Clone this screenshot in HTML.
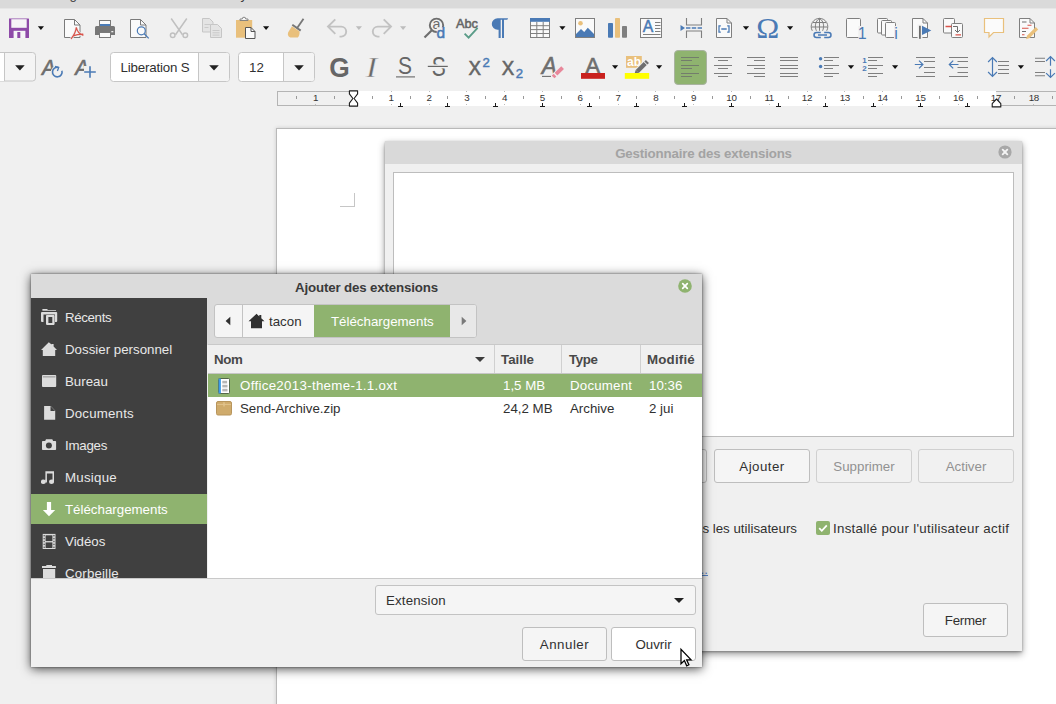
<!DOCTYPE html>
<html lang="fr">
<head>
<meta charset="utf-8">
<title>Ajouter des extensions</title>
<style>
*{box-sizing:border-box;margin:0;padding:0}
html,body{width:1056px;height:704px;overflow:hidden;background:#f0f0f0}
body{font-family:"Liberation Sans","DejaVu Sans",sans-serif;font-size:13.3px;color:#303030;position:relative}
.abs{position:absolute}
#root{position:absolute;left:0;top:0;width:1056px;height:704px;overflow:hidden;background:#f0f0f0}
.t{position:absolute;white-space:nowrap;line-height:16px;height:16px}
/* top strip */
#strip{left:0;top:0;width:1056px;height:9px;background:linear-gradient(#dadada 0,#dadada 7.500px,#ececec 9px);overflow:hidden}
/* toolbar combos */
.combo{position:absolute;top:52px;height:29px;background:#fff;border:1px solid #c4c4c4;border-radius:3px}
.combo .sep{position:absolute;top:0;bottom:0;width:1px;background:#c4c4c4}
.arr{position:absolute;width:0;height:0;border-left:4px solid transparent;border-right:4px solid transparent;border-top:4px solid #222}
.arrs{position:absolute;width:0;height:0;border-left:3px solid transparent;border-right:3px solid transparent;border-top:4px solid #222}
/* ruler */
#ruler{left:277px;top:91px;width:779px;height:15px;background:#fff}
.rnum{position:absolute;top:-1.500px;font-size:9.800px;line-height:15px;color:#333;letter-spacing:-.3px;width:20px;margin-left:-10px;text-align:center}
/* page */
#page{left:276px;top:128px;width:800px;height:600px;background:#fff;border:1px solid #b9b9b9;box-shadow:0 0 4px rgba(0,0,0,.16)}
/* dialogs */
#ext{left:385px;top:141px;width:637px;height:510px;background:#f0f0f0;box-shadow:0 3px 7px rgba(0,0,0,.42),0 1px 2px rgba(0,0,0,.28)}
#ext .title{left:0;top:0;width:637px;height:23px;background:#d9d9d9}
.btn{position:absolute;height:34px;background:#f5f5f5;border:1px solid #bebebe;border-radius:3px;text-align:center;line-height:34px;font-size:13.3px;color:#303030}
.btn.dis{color:#929292;background:#f1f1f1;border-color:#d0d0d0}
#fd{left:31px;top:274px;width:671px;height:393px;background:#f0f0f0;box-shadow:0 1.500px 10px rgba(0,0,0,.7),0 0 2px rgba(0,0,0,.5)}
#fd .title{left:0;top:0;width:671px;height:71px;background:#dbdbdb}
#side{left:0;top:24px;width:176px;height:280px;background:#404040;overflow:hidden}
.si{position:absolute;left:0;width:176px;height:32px;color:#e8e8e8}
.si span{position:absolute;left:34px;top:9px;line-height:16px;font-size:13.3px;white-space:nowrap}
.si svg{position:absolute;left:10px;top:8px}
.si.sel{background:#8fb36f;color:#fff}
#list{left:177px;top:71px;width:494px;height:233px;background:#fff}
#hdr{left:0;top:0;width:494px;height:29px;background:#f0f0f0;border-bottom:1px solid #c6c6c6}
#hdr .cs{position:absolute;top:0;width:1px;height:28px;background:#d0d0d0}
.h{position:absolute;top:7px;font-weight:bold;font-size:13.3px;line-height:16px;color:#484848}
.row{position:absolute;left:0;width:494px;height:24px}
.row span{position:absolute;top:4px;line-height:16px;white-space:nowrap}
.row.sel{background:#8fb36f;color:#fff}
.row.sel span{top:4px}
</style>
</head>
<body>
<div id="root">
<div id="strip" class="abs"><span class="t" style="left:29px;top:-13.400px;color:#3c3c3c">Affichage</span><span class="t" style="left:228px;top:-13.400px;color:#3c3c3c">Styles</span></div>

<svg class="abs" style="left:0;top:0" width="1056" height="50" viewBox="0 0 1056 50" font-family="Liberation Sans, sans-serif">
<defs><path id="dd" d="M0 0h6.200L3.100 3.700z"/></defs>
<!-- save -->
<path d="M9 18.500h19.500a.5.500 0 0 1 .5.500v18.500a.5.500 0 0 1-.5.500H9.500a.5.500 0 0 1-.5-.5z" fill="#8e4aa8"/>
<rect x="11.300" y="19.200" width="15.400" height="8.600" fill="#f6f4f7"/>
<rect x="13.600" y="30.800" width="11.800" height="7.200" fill="#f6f4f7"/><rect x="17.300" y="32" width="3" height="6" fill="#8e4aa8"/>
<use href="#dd" x="37.800" y="26.300" fill="#111"/>
<!-- pdf -->
<path d="M64.500 19.500h10l5.500 5.500v12.500h-15.500z" fill="#fafafa" stroke="#7a7a7a" stroke-width="1"/><path d="M74.500 19.500v5.500h5.500" fill="none" stroke="#7a7a7a"/>
<path d="M71.300 38.600c2.600-3.300 4.600-7.300 5-11.200c.7 3.600 3 6.600 6.600 7.900M73.200 35.900c3-1.200 6.200-1.800 9.700-1.700" fill="none" stroke="#f0f0f0" stroke-width="2.600" stroke-linecap="round"/>
<path d="M71.300 38.600c2.600-3.300 4.600-7.300 5-11.200c.7 3.600 3 6.600 6.600 7.900M73.200 35.900c3-1.200 6.200-1.800 9.700-1.700" fill="none" stroke="#d9534a" stroke-width="1.200" stroke-linecap="round"/>
<!-- print -->
<rect x="99.500" y="20.500" width="11" height="6" fill="#fafafa" stroke="#7a7a7a"/><rect x="100" y="24" width="10" height="2.500" fill="#4a7ab5"/>
<path d="M96.500 26h17a1.500 1.500 0 0 1 1.500 1.500v7.500h-20v-7.500a1.500 1.500 0 0 1 1.500-1.500z" fill="#777"/>
<rect x="99.500" y="32.500" width="11" height="5" fill="#fafafa" stroke="#7a7a7a"/><rect x="111.300" y="31" width="2" height="1.300" fill="#f0f0f0"/>
<!-- preview -->
<path d="M130.500 19.500h10l5.500 5.500v12.500h-15.500z" fill="#fafafa" stroke="#7a7a7a"/><path d="M140.500 19.500v5.500h5.500" fill="none" stroke="#7a7a7a"/>
<circle cx="141.300" cy="30.800" r="4" fill="#fafafa" stroke="#4a7ab5" stroke-width="1.200"/><path d="M144.200 33.700l4.500 4.700" stroke="#4a7ab5" stroke-width="1.300"/>
<!-- cut (disabled) -->
<g stroke="#c0c0c0" stroke-width="1.500" fill="none"><path d="M171.200 18.500l11.300 16.200M186.800 18.500l-11.300 16.200"/><circle cx="172.700" cy="35.200" r="2.300"/><circle cx="185.300" cy="35.200" r="2.300"/></g>
<!-- copy (disabled) -->
<g fill="#e4e4e4" stroke="#c6c6c6" stroke-width="1"><path d="M202.500 18.500h7l3.500 3.500v10h-10.500z"/><path d="M210.500 24.500h7l4 4v9h-11z"/></g>
<g stroke="#c6c6c6" stroke-width=".9"><path d="M204.500 24.500h6M204.500 27.500h4M212.500 30.500h7M212.500 32.800h7M212.500 35.100h7"/></g>
<!-- paste -->
<path d="M236 20h16.200v17.700H236z" fill="#e9c07c"/><path d="M240 20.500v-1.500h2.200a1.800 1.800 0 0 1 3.600 0H248v1.500z" fill="#f6f6f6" stroke="#7a7a7a" stroke-width=".9"/>
<path d="M245.500 27.500h5.500l4 4v7h-9.500z" fill="#fafafa" stroke="#555" stroke-width="1"/><path d="M251 27.500v4h4" fill="none" stroke="#555"/>
<use href="#dd" x="263" y="26.300" fill="#111"/>
<!-- clone brush -->
<path d="M303.500 18.800l-6.700 9.800" stroke="#777" stroke-width="1.800"/><path d="M292.300 24.800l8.400 5.800" stroke="#777" stroke-width="2"/>
<path d="M292 26.200l7.600 5.200c.2 2.400-.6 4.700-1.800 6.200h-7.500c-2.600-1-3-3.600-1.800-5.800z" fill="#e9c07c"/>
<!-- undo / redo (disabled) -->
<g stroke="#c2c2c2" stroke-width="1.900" fill="none"><path d="M335.300 19.300L328 26.600l7.300 7.300M328.500 26.600h12.700a5 5 0 0 1 0 10h-1.700"/><path d="M383.700 19.300l7.300 7.300-7.300 7.300M390.500 26.600h-12.700a5 5 0 0 0 0 10h1.700"/></g>
<use href="#dd" x="355.800" y="26.200" fill="#bdbdbd"/><use href="#dd" x="400" y="26.200" fill="#bdbdbd"/>
<!-- find & replace -->
<circle cx="436.500" cy="25.300" r="6.700" fill="none" stroke="#6e6e6e" stroke-width="1.900"/><path d="M431.600 30.400l-7.100 7.100" stroke="#6e6e6e" stroke-width="2.100"/>
<text x="432.400" y="29.300" font-size="14.300" fill="#6a6a6a">a</text><rect x="436.800" y="27.200" width="9" height="11" fill="#f0f0f0"/><text x="436.600" y="38" font-size="15.500" fill="#4a7ab5" stroke="#4a7ab5" stroke-width=".5">d</text>
<!-- spelling -->
<text x="456" y="27.800" font-size="13.200" fill="#666" stroke="#666" stroke-width=".55" textLength="22" lengthAdjust="spacingAndGlyphs">Abc</text>
<path d="M464.600 33.600l4 4 9-9.700" fill="none" stroke="#5a9c88" stroke-width="1.900"/>
<!-- pilcrow -->
<path d="M497.600 18.200H508.100L507.300 19.800H504V38h-2V19.800h-1.300V38h-2.100V29.800h-1a5.800 5.800 0 0 1 0-11.600z" fill="#4a7ab5"/>
<!-- table -->
<rect x="530.500" y="18.500" width="19" height="19" fill="#fafafa" stroke="#7f7f7f"/><rect x="530" y="18" width="20" height="3.800" fill="#4a7ab5"/>
<path d="M530.500 25.700h19M530.500 29.600h19M530.500 33.500h19M536.800 22v15.500M543.200 22v15.500" stroke="#7f7f7f" stroke-width="1"/>
<use href="#dd" x="559.300" y="26.300" fill="#111"/>
<!-- image -->
<rect x="575.500" y="18.500" width="19" height="19" fill="#fafafa" stroke="#7f7f7f"/><circle cx="580.500" cy="23.300" r="2.300" fill="#e9c07c"/>
<path d="M576 37v-3l5-5 3.200 3 3.600-4.200L594 34v3z" fill="#4a7ab5"/>
<!-- chart -->
<rect x="608" y="23" width="5" height="14.800" rx=".8" fill="#4a7ab5"/><rect x="615" y="18" width="5" height="19.800" rx=".8" fill="#e9c07c"/><rect x="622" y="26" width="5" height="11.800" rx=".8" fill="#7f7f7f"/>
<!-- text box -->
<rect x="640.500" y="18.500" width="21" height="19" fill="#fafafa" stroke="#7f7f7f"/>
<text x="642.700" y="32" font-size="16" fill="#4a7ab5" stroke="#4a7ab5" stroke-width=".5" textLength="10.500" lengthAdjust="spacingAndGlyphs">A</text>
<path d="M655 22.500h5.500M655 25.500h5.500M655 28.500h5.500M655 31.500h5.500M643 34.500h17.500" stroke="#7f7f7f" stroke-width="1"/>
<!-- page break -->
<path d="M686.500 18v7h15V18M686.500 38v-7h15V38" fill="none" stroke="#7f7f7f" stroke-width="1.100"/>
<path d="M680.500 25l4.500 3-4.500 3z" fill="#4a7ab5"/><path d="M686 28h16" stroke="#4a7ab5" stroke-width="1.600" stroke-dasharray="4.400 1.400"/>
<!-- field -->
<path d="M716.500 18.500h10.500l4.500 4.500v14.500h-15z" fill="#fafafa" stroke="#7f7f7f"/><path d="M727 18.500v4.500h4.500" fill="none" stroke="#7f7f7f"/>
<path d="M720.800 25.800h-1.800v6.400h1.800M727.200 25.800h1.800v6.400h-1.800M721.300 29h5.400" fill="none" stroke="#4a7ab5" stroke-width="1.300"/>
<use href="#dd" x="742.900" y="26.300" fill="#111"/>
<!-- special char -->
<text x="756.300" y="37.800" font-family="Liberation Serif, serif" font-size="29" fill="#4a7ab5" textLength="23" lengthAdjust="spacingAndGlyphs">Ω</text>
<use href="#dd" x="787" y="26.300" fill="#111"/>
<!-- hyperlink -->
<g fill="none" stroke="#7f7f7f" stroke-width="1"><path d="M812.300 30.800a8.300 8.300 0 1 1 14.400 0"/><path d="M819.500 18.300v12.500M811.300 27h16.400M813 22.500h13"/><path d="M816.400 30.800c-1.800-4-1.400-9.500 3.100-12.400c4.500 2.900 4.900 8.400 3.100 12.400"/></g>
<g fill="none" stroke="#4a7ab5" stroke-width="1.500"><path d="M820.800 32.500h-4.300a2.500 2.500 0 0 0 0 5h4.300M824.200 32.500h4.300a2.500 2.500 0 0 1 0 5h-4.300M818 35h9"/></g>
<!-- footnote -->
<rect x="846.500" y="18.500" width="14" height="19" rx="1" fill="#fafafa" stroke="#7f7f7f"/>
<rect x="858.300" y="26" width="7" height="13" fill="#f0f0f0"/><text x="857.800" y="38.700" font-size="16" fill="#4a7ab5">1</text>
<!-- endnote -->
<g fill="#fafafa" stroke="#7f7f7f"><rect x="877.500" y="18.500" width="10" height="14.500" rx="1"/><rect x="881.500" y="20.500" width="10" height="14.500" rx="1"/><rect x="885.500" y="22.500" width="10" height="15" rx="1"/></g>
<rect x="894" y="26" width="4" height="13" fill="#f0f0f0"/><text x="894.300" y="38.700" font-size="16" fill="#4a7ab5">i</text>
<!-- bookmark -->
<path d="M912.500 18.500h10.500l4.500 4.500v14.500h-15z" fill="#fafafa" stroke="#7f7f7f"/><path d="M923 18.500v4.500h4.500" fill="none" stroke="#7f7f7f"/>
<rect x="917.500" y="24.500" width="5" height="14" fill="#f0f0f0"/><rect x="919" y="25.800" width="1.800" height="13" fill="#6e6e6e"/><path d="M922 25.800l9.300 4.600-9.300 4.600z" fill="#4a7ab5"/>
<!-- cross reference -->
<rect x="943.500" y="18.500" width="11" height="14.500" rx="1" fill="#fafafa" stroke="#7f7f7f"/><rect x="951.500" y="23.500" width="11" height="14" rx="1" fill="#fafafa" stroke="#7f7f7f"/>
<path d="M945.500 26.500h6M955.500 34.800h5.500" stroke="#d9534a" stroke-width="1.300"/><path d="M953 26.500h4.500v5.500M955 30l2.500 2.500 2.500-2.500" fill="none" stroke="#6e6e6e" stroke-width="1"/>
<!-- comment -->
<path d="M984.500 18.500h19v14h-10l-4.500 4.500v-4.500h-4.500z" fill="#fbfbfb" stroke="#e9c07c" stroke-width="1.200"/>
<!-- track changes -->
<path d="M1019.500 18.500h10.500l4.500 4.500v14.500h-15z" fill="#fafafa" stroke="#7f7f7f"/><path d="M1030 18.500v4.500h4.500" fill="none" stroke="#7f7f7f"/>
<path d="M1022 22h4.500M1022 31.500h4" stroke="#6e6e6e" stroke-width="1"/><path d="M1027.500 25.200h4M1022 28.300h6.500M1022 34.700h2.500" stroke="#d9534a" stroke-width="1.100"/>
<path d="M1035.800 27l2.400 2.400-8.600 8.600-3.600 1.200 1.200-3.600z" fill="#e9c07c"/>
</svg>
<svg class="abs" style="left:0;top:48px" width="1056" height="40" viewBox="0 48 1056 40" font-family="Liberation Sans, sans-serif">
<defs><path id="dd2" d="M0 0h6.200L3.100 3.700z"/><path id="da" d="M0 0h9.600L4.800 5.300z"/></defs>
<path d="M-2 52.500h34.500a3 3 0 0 1 3 3v22.500a3 3 0 0 1-3 3H-2z" fill="#f4f4f4" stroke="#c6c6c6"/><rect x="-2" y="53" width="6" height="28" fill="#fff"/><path d="M4.500 53v28" stroke="#c6c6c6"/>
<use href="#da" x="15.100" y="65.200" fill="#222"/>
<text x="42" y="75" font-size="22.500" font-style="italic" fill="#6e6e6e" stroke="#6e6e6e" stroke-width=".7" textLength="13.500" lengthAdjust="spacingAndGlyphs">A</text>
<circle cx="57.300" cy="72" r="6.300" fill="#f0f0f0"/><path d="M61.900 70.700a4.800 4.800 0 1 1-3.400-3.300" fill="none" stroke="#4a7ab5" stroke-width="1.600"/><path d="M55 66.300l3.700 1.200-1.300 3.400" fill="none" stroke="#4a7ab5" stroke-width="1.300"/>
<text x="75.300" y="75" font-size="22.500" font-style="italic" fill="#6e6e6e" stroke="#6e6e6e" stroke-width=".7" textLength="13.500" lengthAdjust="spacingAndGlyphs">A</text>
<rect x="84" y="66" width="12" height="12" fill="#f0f0f0"/><path d="M90 66.200v11.600M84.200 72h11.600" stroke="#4a7ab5" stroke-width="1.600"/>
<rect x="110.500" y="52.500" width="119" height="29" rx="3" fill="#fff" stroke="#c6c6c6"/><path d="M198.500 53h28a2.500 2.500 0 0 1 2.500 2.500v23a2.500 2.500 0 0 1-2.500 2.500h-28z" fill="#f4f4f4"/><path d="M198.500 53v28" stroke="#c6c6c6"/>
<text x="120.500" y="72" font-size="13.300" fill="#303030" textLength="69" lengthAdjust="spacing">Liberation S</text>
<use href="#da" x="209.200" y="65.200" fill="#222"/>
<rect x="238.500" y="52.500" width="76" height="29" rx="3" fill="#fff" stroke="#c6c6c6"/><path d="M283.500 53h28a2.500 2.500 0 0 1 2.500 2.500v23a2.500 2.500 0 0 1-2.500 2.500h-28z" fill="#f4f4f4"/><path d="M283.500 53v28" stroke="#c6c6c6"/>
<text x="249" y="72" font-size="13.300" fill="#303030">12</text>
<use href="#da" x="294.200" y="65.200" fill="#222"/>
<text x="329.200" y="76.500" font-size="27" font-weight="bold" fill="#666" textLength="20.500" lengthAdjust="spacingAndGlyphs">G</text>
<text x="365.800" y="76.500" font-family="Liberation Serif, serif" font-style="italic" font-size="29.500" fill="#6a6a6a" stroke="#f0f0f0" stroke-width=".4" textLength="11.500" lengthAdjust="spacingAndGlyphs">I</text>
<text x="398" y="73.600" font-size="23.500" fill="#666" textLength="14" lengthAdjust="spacingAndGlyphs">S</text><path d="M396 76.900h19" stroke="#666" stroke-width="1.100"/>
<text x="431.700" y="76.300" font-size="27" fill="#666" textLength="14" lengthAdjust="spacingAndGlyphs">S</text><rect x="427" y="64.400" width="22" height="4" fill="#f0f0f0"/><path d="M427.800 66.400h20" stroke="#666" stroke-width="1.200"/>
<text x="468.500" y="75.400" font-size="20" fill="#666" stroke="#666" stroke-width=".6" textLength="12.500" lengthAdjust="spacingAndGlyphs">X</text><text x="482.500" y="66.700" font-size="13.200" fill="#4a7ab5" stroke="#4a7ab5" stroke-width=".45">2</text>
<text x="501.700" y="75.400" font-size="20" fill="#666" stroke="#666" stroke-width=".6" textLength="12.500" lengthAdjust="spacingAndGlyphs">X</text><text x="515.700" y="78" font-size="13.200" fill="#4a7ab5" stroke="#4a7ab5" stroke-width=".45">2</text>
<text x="541.800" y="73.800" font-size="23" font-style="italic" fill="#6e6e6e" stroke="#6e6e6e" stroke-width=".6" textLength="15" lengthAdjust="spacingAndGlyphs">A</text><path d="M542 76.400h9" stroke="#6e6e6e" stroke-width="1.100"/>
<path d="M562.800 67.500l-9.600 9.400" stroke="#f0f0f0" stroke-width="5.600"/><path d="M562.600 67.600l-6.600 6.500" stroke="#e8879a" stroke-width="3.800"/><path d="M555 75.100l-1.900 1.900" stroke="#e8879a" stroke-width="3.800"/>
<text x="585.500" y="72.800" font-size="21.600" fill="#6e6e6e" stroke="#6e6e6e" stroke-width=".6" textLength="14.500" lengthAdjust="spacingAndGlyphs">A</text><rect x="581" y="73" width="24" height="5.800" fill="#c9211e"/>
<use href="#dd2" x="612" y="65.200" fill="#111"/>
<rect x="626" y="56" width="15.800" height="11.800" fill="#e9c07c"/><text x="627" y="66.300" font-size="12.500" font-weight="bold" fill="#fff" textLength="14" lengthAdjust="spacingAndGlyphs">ab</text>
<path d="M647.200 61.600l-11.200 11.200" stroke="#f0f0f0" stroke-width="6.600" opacity=".85"/><path d="M647.400 61.400l-1.500 1.500" stroke="#6e6e6e" stroke-width="4.300"/><path d="M645.200 63.600l-8 8" stroke="#6e6e6e" stroke-width="4.300"/><path d="M635.700 70.100l3 3-4.400 1.400z" fill="#6e6e6e"/>
<rect x="624.800" y="73" width="24.400" height="5.800" fill="#ffff00"/>
<use href="#dd2" x="656" y="65.200" fill="#111"/>
<rect x="674.500" y="50.500" width="32" height="34" rx="3.500" fill="#8fb36f" stroke="#a9b3a0"/>
<path d="M681.0 57.5H699.0M681.0 60.5H692.0M681.0 65.5H699.0M681.0 68.5H692.0M681.0 73.5H699.0M681.0 76.5H692.0" stroke="#737d6c" stroke-width="1"/>
<path d="M714.0 57.5H732.0M718.0 60.5H728.0M714.0 65.5H732.0M718.0 68.5H728.0M714.0 73.5H732.0M718.0 76.5H728.0" stroke="#7f7f7f" stroke-width="1"/>
<path d="M747.0 57.5H765.0M754.0 60.5H765.0M747.0 65.5H765.0M754.0 68.5H765.0M747.0 73.5H765.0M754.0 76.5H765.0" stroke="#7f7f7f" stroke-width="1"/>
<path d="M780.0 57.5H798.0M780.0 60.5H798.0M780.0 65.5H798.0M780.0 68.5H798.0M780.0 73.5H798.0M780.0 76.5H798.0" stroke="#7f7f7f" stroke-width="1"/>
<path d="M824.0 57.5H839.0M824.0 60.5H833.0M824.0 65.5H839.0M824.0 68.5H833.0M824.0 73.5H839.0M824.0 76.5H833.0" stroke="#7f7f7f" stroke-width="1"/>
<circle cx="820.600" cy="58.700" r="1.700" fill="#4a7ab5"/><circle cx="820.600" cy="66.500" r="1.700" fill="#4a7ab5"/>
<use href="#dd2" x="847.900" y="65.200" fill="#111"/>
<path d="M868.0 57.5H883.0M868.0 60.5H877.0M868.0 65.5H883.0M868.0 68.5H877.0M868.0 73.5H883.0M868.0 76.5H877.0" stroke="#7f7f7f" stroke-width="1"/>
<text x="862.300" y="62.900" font-size="8" font-weight="bold" fill="#4a7ab5">1</text><text x="862.300" y="71" font-size="8" font-weight="bold" fill="#4a7ab5">2</text>
<use href="#dd2" x="892" y="65.200" fill="#111"/>
<path d="M916.0 57.5H935.0M924.0 61.5H935.0M924.0 67.5H935.0M924.0 72.5H935.0M916.0 76.5H935.0" stroke="#7f7f7f" stroke-width="1"/>
<path d="M914.800 64.500h8M919 60.600l3.900 3.900-3.900 3.900" fill="none" stroke="#4a7ab5" stroke-width="1.200"/>
<path d="M949.0 57.5H968.0M957.5 61.5H968.0M957.5 67.5H968.0M957.5 72.5H968.0M949.0 76.5H968.0" stroke="#7f7f7f" stroke-width="1"/>
<path d="M958.500 64.500h-9M953.200 60.600l-3.900 3.900 3.900 3.900" fill="none" stroke="#4a7ab5" stroke-width="1.200"/>
<path d="M992.500 57.800v18.400M988.100 62l4.400-4.400 4.400 4.400M988.100 72l4.400 4.400 4.400-4.400" fill="none" stroke="#4a7ab5" stroke-width="1.200"/>
<path d="M998 61.500h11M998 65.500h11M998 69.500h11M998 73.500h11" stroke="#7f7f7f" stroke-width="1"/>
<use href="#dd2" x="1017.800" y="65.200" fill="#111"/>
<path d="M1035 58.300h10M1035 61.500h10M1035 72.500h10M1035 75.700h10" stroke="#7f7f7f" stroke-width="1.100"/>
<path d="M1050.500 56.800v9M1046.100 61l4.400-4.400 4.400 4.400M1050.500 69.300v8M1046.100 73.100l4.400 4.400 4.400-4.400" fill="none" stroke="#4a7ab5" stroke-width="1.200"/>
</svg>

<!-- ruler -->
<div id="ruler" class="abs">
<div class="abs" style="left:0;top:0;width:76px;height:15px;background:#f0f0f0;border:1px solid #b4b4b4;border-right:none"></div>
<div class="abs" style="left:719px;top:0;width:60px;height:15px;background:#f0f0f0;border-top:1px solid #b4b4b4;border-bottom:1px solid #b4b4b4"></div>
<div class="rnum" style="left:38.6px">1</div>
<div class="abs" style="left:38.1px;top:0;width:1px;height:1px;background:#bbb"></div><div class="abs" style="left:38.1px;top:13px;width:1px;height:1px;background:#bbb"></div>
<div class="abs" style="left:19.2px;top:5px;width:1px;height:3px;background:#999"></div>
<div class="abs" style="left:57.0px;top:5px;width:1px;height:3px;background:#999"></div>
<div class="rnum" style="left:114.2px">1</div>
<div class="abs" style="left:113.7px;top:0;width:1px;height:1px;background:#bbb"></div><div class="abs" style="left:113.7px;top:13px;width:1px;height:1px;background:#bbb"></div>
<div class="rnum" style="left:152.0px">2</div>
<div class="abs" style="left:151.5px;top:0;width:1px;height:1px;background:#bbb"></div><div class="abs" style="left:151.5px;top:13px;width:1px;height:1px;background:#bbb"></div>
<div class="rnum" style="left:189.8px">3</div>
<div class="abs" style="left:189.3px;top:0;width:1px;height:1px;background:#bbb"></div><div class="abs" style="left:189.3px;top:13px;width:1px;height:1px;background:#bbb"></div>
<div class="rnum" style="left:227.6px">4</div>
<div class="abs" style="left:227.1px;top:0;width:1px;height:1px;background:#bbb"></div><div class="abs" style="left:227.1px;top:13px;width:1px;height:1px;background:#bbb"></div>
<div class="rnum" style="left:265.4px">5</div>
<div class="abs" style="left:264.9px;top:0;width:1px;height:1px;background:#bbb"></div><div class="abs" style="left:264.9px;top:13px;width:1px;height:1px;background:#bbb"></div>
<div class="rnum" style="left:303.2px">6</div>
<div class="abs" style="left:302.7px;top:0;width:1px;height:1px;background:#bbb"></div><div class="abs" style="left:302.7px;top:13px;width:1px;height:1px;background:#bbb"></div>
<div class="rnum" style="left:341.0px">7</div>
<div class="abs" style="left:340.5px;top:0;width:1px;height:1px;background:#bbb"></div><div class="abs" style="left:340.5px;top:13px;width:1px;height:1px;background:#bbb"></div>
<div class="rnum" style="left:378.8px">8</div>
<div class="abs" style="left:378.3px;top:0;width:1px;height:1px;background:#bbb"></div><div class="abs" style="left:378.3px;top:13px;width:1px;height:1px;background:#bbb"></div>
<div class="rnum" style="left:416.6px">9</div>
<div class="abs" style="left:416.1px;top:0;width:1px;height:1px;background:#bbb"></div><div class="abs" style="left:416.1px;top:13px;width:1px;height:1px;background:#bbb"></div>
<div class="rnum" style="left:454.4px">10</div>
<div class="abs" style="left:453.9px;top:0;width:1px;height:1px;background:#bbb"></div><div class="abs" style="left:453.9px;top:13px;width:1px;height:1px;background:#bbb"></div>
<div class="rnum" style="left:492.2px">11</div>
<div class="abs" style="left:491.7px;top:0;width:1px;height:1px;background:#bbb"></div><div class="abs" style="left:491.7px;top:13px;width:1px;height:1px;background:#bbb"></div>
<div class="rnum" style="left:530.0px">12</div>
<div class="abs" style="left:529.5px;top:0;width:1px;height:1px;background:#bbb"></div><div class="abs" style="left:529.5px;top:13px;width:1px;height:1px;background:#bbb"></div>
<div class="rnum" style="left:567.8px">13</div>
<div class="abs" style="left:567.3px;top:0;width:1px;height:1px;background:#bbb"></div><div class="abs" style="left:567.3px;top:13px;width:1px;height:1px;background:#bbb"></div>
<div class="rnum" style="left:605.6px">14</div>
<div class="abs" style="left:605.1px;top:0;width:1px;height:1px;background:#bbb"></div><div class="abs" style="left:605.1px;top:13px;width:1px;height:1px;background:#bbb"></div>
<div class="rnum" style="left:643.4px">15</div>
<div class="abs" style="left:642.9px;top:0;width:1px;height:1px;background:#bbb"></div><div class="abs" style="left:642.9px;top:13px;width:1px;height:1px;background:#bbb"></div>
<div class="rnum" style="left:681.2px">16</div>
<div class="abs" style="left:680.7px;top:0;width:1px;height:1px;background:#bbb"></div><div class="abs" style="left:680.7px;top:13px;width:1px;height:1px;background:#bbb"></div>
<div class="rnum" style="left:719.0px">17</div>
<div class="abs" style="left:718.5px;top:0;width:1px;height:1px;background:#bbb"></div><div class="abs" style="left:718.5px;top:13px;width:1px;height:1px;background:#bbb"></div>
<div class="rnum" style="left:756.8px">18</div>
<div class="abs" style="left:756.3px;top:0;width:1px;height:1px;background:#bbb"></div><div class="abs" style="left:756.3px;top:13px;width:1px;height:1px;background:#bbb"></div>
<div class="abs" style="left:94.8px;top:5px;width:1px;height:3px;background:#999"></div>
<div class="abs" style="left:132.6px;top:5px;width:1px;height:3px;background:#999"></div>
<div class="abs" style="left:170.4px;top:5px;width:1px;height:3px;background:#999"></div>
<div class="abs" style="left:208.2px;top:5px;width:1px;height:3px;background:#999"></div>
<div class="abs" style="left:246.0px;top:5px;width:1px;height:3px;background:#999"></div>
<div class="abs" style="left:283.8px;top:5px;width:1px;height:3px;background:#999"></div>
<div class="abs" style="left:321.6px;top:5px;width:1px;height:3px;background:#999"></div>
<div class="abs" style="left:359.4px;top:5px;width:1px;height:3px;background:#999"></div>
<div class="abs" style="left:397.2px;top:5px;width:1px;height:3px;background:#999"></div>
<div class="abs" style="left:435.0px;top:5px;width:1px;height:3px;background:#999"></div>
<div class="abs" style="left:472.8px;top:5px;width:1px;height:3px;background:#999"></div>
<div class="abs" style="left:510.6px;top:5px;width:1px;height:3px;background:#999"></div>
<div class="abs" style="left:548.4px;top:5px;width:1px;height:3px;background:#999"></div>
<div class="abs" style="left:586.2px;top:5px;width:1px;height:3px;background:#999"></div>
<div class="abs" style="left:624.0px;top:5px;width:1px;height:3px;background:#999"></div>
<div class="abs" style="left:661.8px;top:5px;width:1px;height:3px;background:#999"></div>
<div class="abs" style="left:699.6px;top:5px;width:1px;height:3px;background:#999"></div>
<div class="abs" style="left:737.4px;top:5px;width:1px;height:3px;background:#999"></div>
<div class="abs" style="left:775.2px;top:5px;width:1px;height:3px;background:#999"></div>
<div class="abs" style="left:123.0px;top:12px;width:1.200px;height:4px;background:#1a1a1a"></div>
<div class="abs" style="left:121.1px;top:15px;width:5px;height:1.200px;background:#1a1a1a"></div>
<div class="abs" style="left:170.3px;top:12px;width:1.200px;height:4px;background:#1a1a1a"></div>
<div class="abs" style="left:168.4px;top:15px;width:5px;height:1.200px;background:#1a1a1a"></div>
<div class="abs" style="left:217.5px;top:12px;width:1.200px;height:4px;background:#1a1a1a"></div>
<div class="abs" style="left:215.6px;top:15px;width:5px;height:1.200px;background:#1a1a1a"></div>
<div class="abs" style="left:264.8px;top:12px;width:1.200px;height:4px;background:#1a1a1a"></div>
<div class="abs" style="left:262.9px;top:15px;width:5px;height:1.200px;background:#1a1a1a"></div>
<div class="abs" style="left:312.0px;top:12px;width:1.200px;height:4px;background:#1a1a1a"></div>
<div class="abs" style="left:310.1px;top:15px;width:5px;height:1.200px;background:#1a1a1a"></div>
<div class="abs" style="left:359.3px;top:12px;width:1.200px;height:4px;background:#1a1a1a"></div>
<div class="abs" style="left:357.4px;top:15px;width:5px;height:1.200px;background:#1a1a1a"></div>
<div class="abs" style="left:406.5px;top:12px;width:1.200px;height:4px;background:#1a1a1a"></div>
<div class="abs" style="left:404.6px;top:15px;width:5px;height:1.200px;background:#1a1a1a"></div>
<div class="abs" style="left:453.8px;top:12px;width:1.200px;height:4px;background:#1a1a1a"></div>
<div class="abs" style="left:451.9px;top:15px;width:5px;height:1.200px;background:#1a1a1a"></div>
<div class="abs" style="left:501.0px;top:12px;width:1.200px;height:4px;background:#1a1a1a"></div>
<div class="abs" style="left:499.1px;top:15px;width:5px;height:1.200px;background:#1a1a1a"></div>
<div class="abs" style="left:548.3px;top:12px;width:1.200px;height:4px;background:#1a1a1a"></div>
<div class="abs" style="left:546.4px;top:15px;width:5px;height:1.200px;background:#1a1a1a"></div>
<div class="abs" style="left:595.5px;top:12px;width:1.200px;height:4px;background:#1a1a1a"></div>
<div class="abs" style="left:593.6px;top:15px;width:5px;height:1.200px;background:#1a1a1a"></div>
<div class="abs" style="left:642.8px;top:12px;width:1.200px;height:4px;background:#1a1a1a"></div>
<div class="abs" style="left:640.9px;top:15px;width:5px;height:1.200px;background:#1a1a1a"></div>
<div class="abs" style="left:690.0px;top:12px;width:1.200px;height:4px;background:#1a1a1a"></div>
<div class="abs" style="left:688.1px;top:15px;width:5px;height:1.200px;background:#1a1a1a"></div>
<svg class="abs" style="left:70.9px;top:-1px" width="11" height="17" viewBox="0 0 11 17"><path d="M1.400 .9h8.200v3L6.100 8.500 9.600 13.100v3H1.400v-3L4.900 8.500 1.400 3.900z" fill="#fff" stroke="#1a1a1a" stroke-width="1.100" stroke-linejoin="round"/></svg>
<svg class="abs" style="left:714.1px;top:7px" width="11" height="10" viewBox="0 0 11 10"><path d="M5.500 1L9.800 5.600v3.300H1.200V5.600z" fill="#fff" stroke="#1a1a1a" stroke-width="1.100" stroke-linejoin="round"/></svg>
</div>

<!-- document page -->
<div id="page" class="abs">
  <div class="abs" style="left:63px;top:64px;width:15px;height:14px;border-right:1px solid #c6c6c6;border-bottom:1px solid #c6c6c6"></div>
</div>

<!-- Extension manager dialog -->
<div id="ext" class="abs">
  <div class="title abs"></div>
  <div class="t" style="left:0;width:637px;top:5px;text-align:center;font-weight:bold;color:#a3a3a3;letter-spacing:-.16px">Gestionnaire des extensions</div>
  <svg class="abs" style="left:612px;top:3px" width="16" height="16" viewBox="0 0 16 16"><circle cx="8" cy="8" r="6.600" fill="#a8a8a8"/><path d="M5.700 5.700l4.600 4.600M10.300 5.700l-4.600 4.600" stroke="#f4f4f4" stroke-width="1.900" stroke-linecap="round"/></svg>
  <div class="abs" style="left:8px;top:31px;width:621px;height:265px;background:#fff;border:1px solid #bdbdbd"></div>
  <div class="btn" style="left:227px;top:308px;width:95px"></div>
  <div class="btn" style="left:329px;top:308px;width:96px;letter-spacing:.45px">Ajouter</div>
  <div class="btn dis" style="left:431px;top:308px;width:96px">Supprimer</div>
  <div class="btn dis" style="left:533px;top:308px;width:96px">Activer</div>
  <div class="t" style="right:225px;top:380px">Installé pour tous les utilisateurs</div>
  <div class="abs" style="left:431px;top:380px;width:14px;height:14px;background:#8fb36f;border-radius:2px"></div>
  <svg class="abs" style="left:431px;top:380px" width="14" height="14" viewBox="0 0 14 14"><path d="M3.2 7.2l2.6 2.6 5-5.4" stroke="#fff" stroke-width="1.8" fill="none"/></svg>
  <div class="t" style="left:448px;top:380px;letter-spacing:.29px">Installé pour l'utilisateur actif</div>
  <div class="t" style="right:314px;top:421px;color:#5585cc;text-decoration:underline">Obtenir des extensions en ligne...</div>
  <div class="btn" style="left:538px;top:462px;width:85px;letter-spacing:-.25px">Fermer</div>
</div>

<!-- File chooser dialog -->
<div id="fd" class="abs">
  <div class="title abs"></div>
  <div class="t" style="left:0;width:671px;top:6px;text-align:center;font-weight:bold;color:#3a3a3a;letter-spacing:-.16px">Ajouter des extensions</div>
  <svg class="abs" style="left:646px;top:4px" width="16" height="16" viewBox="0 0 16 16"><circle cx="8" cy="8" r="6.8" fill="#8fb36f"/><path d="M5.7 5.7l4.6 4.6M10.3 5.7l-4.6 4.6" stroke="#fff" stroke-width="1.7" stroke-linecap="round"/></svg>

  <div id="side" class="abs">
    <div class="si" style="top:3px"><svg width="17" height="17" viewBox="0 0 17 17"><path d="M1.400 0h4.600l1 .9h8v.8H1.400z" fill="#dcdcdc"/><path d="M1 3h14.200a1 1 0 0 1 1 1v8a1 1 0 0 1-1 1h-1.200V5.400H2.500V13H1a1 1 0 0 1-1-1V4a1 1 0 0 1 1-1z" fill="#dcdcdc"/><path d="M5.800 6h7a.8.800 0 0 1 .8.800v8.300a.8.800 0 0 1-.8.800h-7a.8.800 0 0 1-.8-.8V6.800a.8.800 0 0 1 .8-.8z" fill="#dcdcdc"/><rect x="7.400" y="8" width="3.900" height="6" fill="#404040"/></svg><span style="letter-spacing:-0.36px">Récents</span></div>
    <div class="si" style="top:35px"><svg width="17" height="17" viewBox="0 0 17 17"><path d="M7.800 1.200L0 9h1.800v6h12.400V9H16L12.600 5.600V3h-2v.6z" fill="#dcdcdc"/></svg><span>Dossier personnel</span></div>
    <div class="si" style="top:67px"><svg width="17" height="17" viewBox="0 0 17 17"><rect x="1" y="2" width="14.200" height="12" rx=".9" fill="#dcdcdc"/><rect x="1.800" y="3.500" width="12.600" height=".8" fill="#404040" opacity=".6"/></svg><span>Bureau</span></div>
    <div class="si" style="top:99px"><svg width="17" height="17" viewBox="0 0 17 17"><path d="M3.100 1.100h6.600l4.500 4.700v9H3.100z" fill="#dcdcdc"/><path d="M9.500 1.100l4.700 4.900H9.500z" fill="#404040"/></svg><span style="letter-spacing:0.18px">Documents</span></div>
    <div class="si" style="top:131px"><svg width="17" height="17" viewBox="0 0 17 17"><path d="M5 2.300h6.300l.8 1.700h2.200a.8.800 0 0 1 .8.800v7.400a.8.800 0 0 1-.8.800H1.800a.8.800 0 0 1-.8-.8V4.800a.8.800 0 0 1 .8-.8h2.400z" fill="#dcdcdc"/><circle cx="7.900" cy="8.500" r="3" fill="#404040"/></svg><span style="letter-spacing:-0.24px">Images</span></div>
    <div class="si" style="top:163px"><svg width="17" height="17" viewBox="0 0 17 17"><path d="M4.400 2.300H13V12.600h-1.500V4.600H5.900V12.600H4.400z" fill="#dcdcdc"/><ellipse cx="2.400" cy="12.800" rx="2.500" ry="2.300" fill="#dcdcdc"/><ellipse cx="10.500" cy="12.800" rx="2.500" ry="2.300" fill="#dcdcdc"/><path d="M4.400 10.500h1.500v3H4.400zM11.500 10.500H13v3h-1.500z" fill="#dcdcdc"/></svg><span style="letter-spacing:0.24px">Musique</span></div>
    <div class="si sel" style="top:196px;height:30px"><svg style="top:7px" width="17" height="17" viewBox="0 0 17 17"><path d="M5.900 1h4.200v8h4.100L8 15.200 1.900 9h4z" fill="#fff"/></svg><span style="top:8px">Téléchargements</span></div>
    <div class="si" style="top:227px"><svg width="17" height="17" viewBox="0 0 17 17"><rect x="1.700" y=".9" width="12.800" height="15.100" fill="#dcdcdc"/><rect x="4.600" y="2.300" width="6.800" height="5.800" fill="#404040"/><rect x="4.600" y="9.400" width="6.800" height="5.600" fill="#404040"/><g fill="#404040"><rect x="2.600" y="2" width="1.100" height="1.400"/><rect x="2.600" y="4.900" width="1.100" height="1.400"/><rect x="2.600" y="7.800" width="1.100" height="1.400"/><rect x="2.600" y="10.700" width="1.100" height="1.400"/><rect x="2.600" y="13.600" width="1.100" height="1.400"/><rect x="12.400" y="2" width="1.100" height="1.400"/><rect x="12.400" y="4.900" width="1.100" height="1.400"/><rect x="12.400" y="7.800" width="1.100" height="1.400"/><rect x="12.400" y="10.700" width="1.100" height="1.400"/><rect x="12.400" y="13.600" width="1.100" height="1.400"/></g></svg><span>Vidéos</span></div>
    <div class="si" style="top:259px"><svg width="17" height="17" viewBox="0 0 17 17"><path d="M5.300 0h5.700v1.100h3.900v1.800H1V1.100h4.300z" fill="#dcdcdc"/><path d="M2 4h12.200v11H2z" fill="#dcdcdc"/></svg><span style="letter-spacing:0.15px">Corbeille</span></div>
  </div>

  <!-- path bar -->
  <div class="abs" style="left:183px;top:30px;width:263px;height:34px;background:#f5f5f5;border:1px solid #c3c3c3;border-radius:3px;overflow:hidden">
    <div class="abs" style="left:27px;top:0;width:1px;height:32px;background:#c3c3c3"></div>
    <div class="abs" style="left:99px;top:0;width:136px;height:32px;background:#8fb36f"></div>
    <div class="abs" style="left:235px;top:0;width:27px;height:32px;background:#e8e8e8"></div>
    <svg class="abs" style="left:9px;top:11px" width="8" height="10" viewBox="0 0 8 10"><path d="M6.300 .8v8.400L1.600 5z" fill="#303030"/></svg>
    <svg class="abs" style="left:33px;top:8px" width="17" height="16" viewBox="0 0 17 16"><path d="M8.500 .8L.5 8.300H3V15.200h11V8.300h2.500L13.300 5.300V2h-2v1.400z" fill="#303030"/></svg>
    <div class="t" style="left:54px;top:9px;color:#303030">tacon</div>
    <div class="t" style="left:116px;top:9px;color:#fff">Téléchargements</div>
    <svg class="abs" style="left:245px;top:11px" width="8" height="10" viewBox="0 0 8 10"><path d="M1.700 .8v8.400L6.400 5z" fill="#7a7a7a"/></svg>
  </div>

  <div class="abs" style="left:177px;top:70px;width:494px;height:1px;background:#c9c9c9"></div>
  <div id="list" class="abs">
    <div id="hdr" class="abs">
      <div class="h" style="left:6px;letter-spacing:-.4px">Nom</div>
      <div class="arr" style="left:267px;top:12px;border-width:5px 5px 0 5px;border-top-color:#3c3c3c"></div>
      <div class="cs" style="left:286px"></div>
      <div class="h" style="left:293px">Taille</div>
      <div class="cs" style="left:353px"></div>
      <div class="h" style="left:361px;letter-spacing:-.4px">Type</div>
      <div class="cs" style="left:432px"></div>
      <div class="h" style="left:439px;letter-spacing:.2px">Modifié</div>
    </div>
    <div class="row sel" style="top:29px;height:23px">
      <svg class="abs" style="left:10px;top:4px" width="12" height="16" viewBox="0 0 12 16"><rect x=".5" y=".5" width="11" height="15" rx=".8" fill="#fff" stroke="#55684a"/><rect x=".6" y=".6" width="2.300" height="14.800" fill="#3d9be6"/><g fill="#b5b5b5"><rect x="4.300" y="2.800" width="4.800" height="2.600"/><rect x="4.300" y="6.800" width="5.200" height="2.600"/><rect x="4.300" y="10.800" width="5.200" height="2.600"/></g></svg>
      <span style="left:32px;letter-spacing:.31px">Office2013-theme-1.1.oxt</span>
      <span style="left:295px">1,5 MB</span>
      <span style="left:362px;letter-spacing:.2px">Document</span>
      <span style="left:441px">10:36</span>
    </div>
    <div class="row" style="top:52px">
      <svg class="abs" style="left:8px;top:4px" width="16" height="15" viewBox="0 0 16 15"><rect x=".5" y=".5" width="15" height="13.500" rx="1.500" fill="#cfab6c" stroke="#b8955c"/><path d="M1 3.400h14" stroke="#e2c48e" stroke-width="1"/><path d="M8 1.200v4.300" stroke="#e2c48e" stroke-width="1.400"/></svg>
      <span style="left:32px">Send-Archive.zip</span>
      <span style="left:295px">24,2 MB</span>
      <span style="left:362px">Archive</span>
      <span style="left:441px">2 jui</span>
    </div>
  </div>
  <div class="abs" style="left:0;top:304px;width:671px;height:1px;background:#c9c9c9"></div>

  <!-- filter combo -->
  <div class="abs" style="left:344px;top:311px;width:321px;height:30px;background:#f5f5f5;border:1px solid #c3c3c3;border-radius:3px"></div>
  <div class="t" style="left:355px;top:319px;letter-spacing:.16px">Extension</div>
  <div class="arr" style="left:643px;top:324px;border-width:5px 5px 0 5px"></div>
  <div class="btn" style="left:491px;top:353px;width:85px;letter-spacing:.5px">Annuler</div>
  <div class="btn" style="left:580px;top:353px;width:85px;background:#fff">Ouvrir</div>
</div>

<!-- mouse cursor -->
<svg class="abs" style="left:678px;top:645px" width="16" height="24" viewBox="0 0 16 24"><path d="M3 4.200v14.600l3.400-3.200 2.300 5.200 2.200-1-2.300-5h4.500z" fill="#fff" stroke="#000" stroke-width="1.250" stroke-linejoin="miter"/></svg>
</div>
</body>
</html>
